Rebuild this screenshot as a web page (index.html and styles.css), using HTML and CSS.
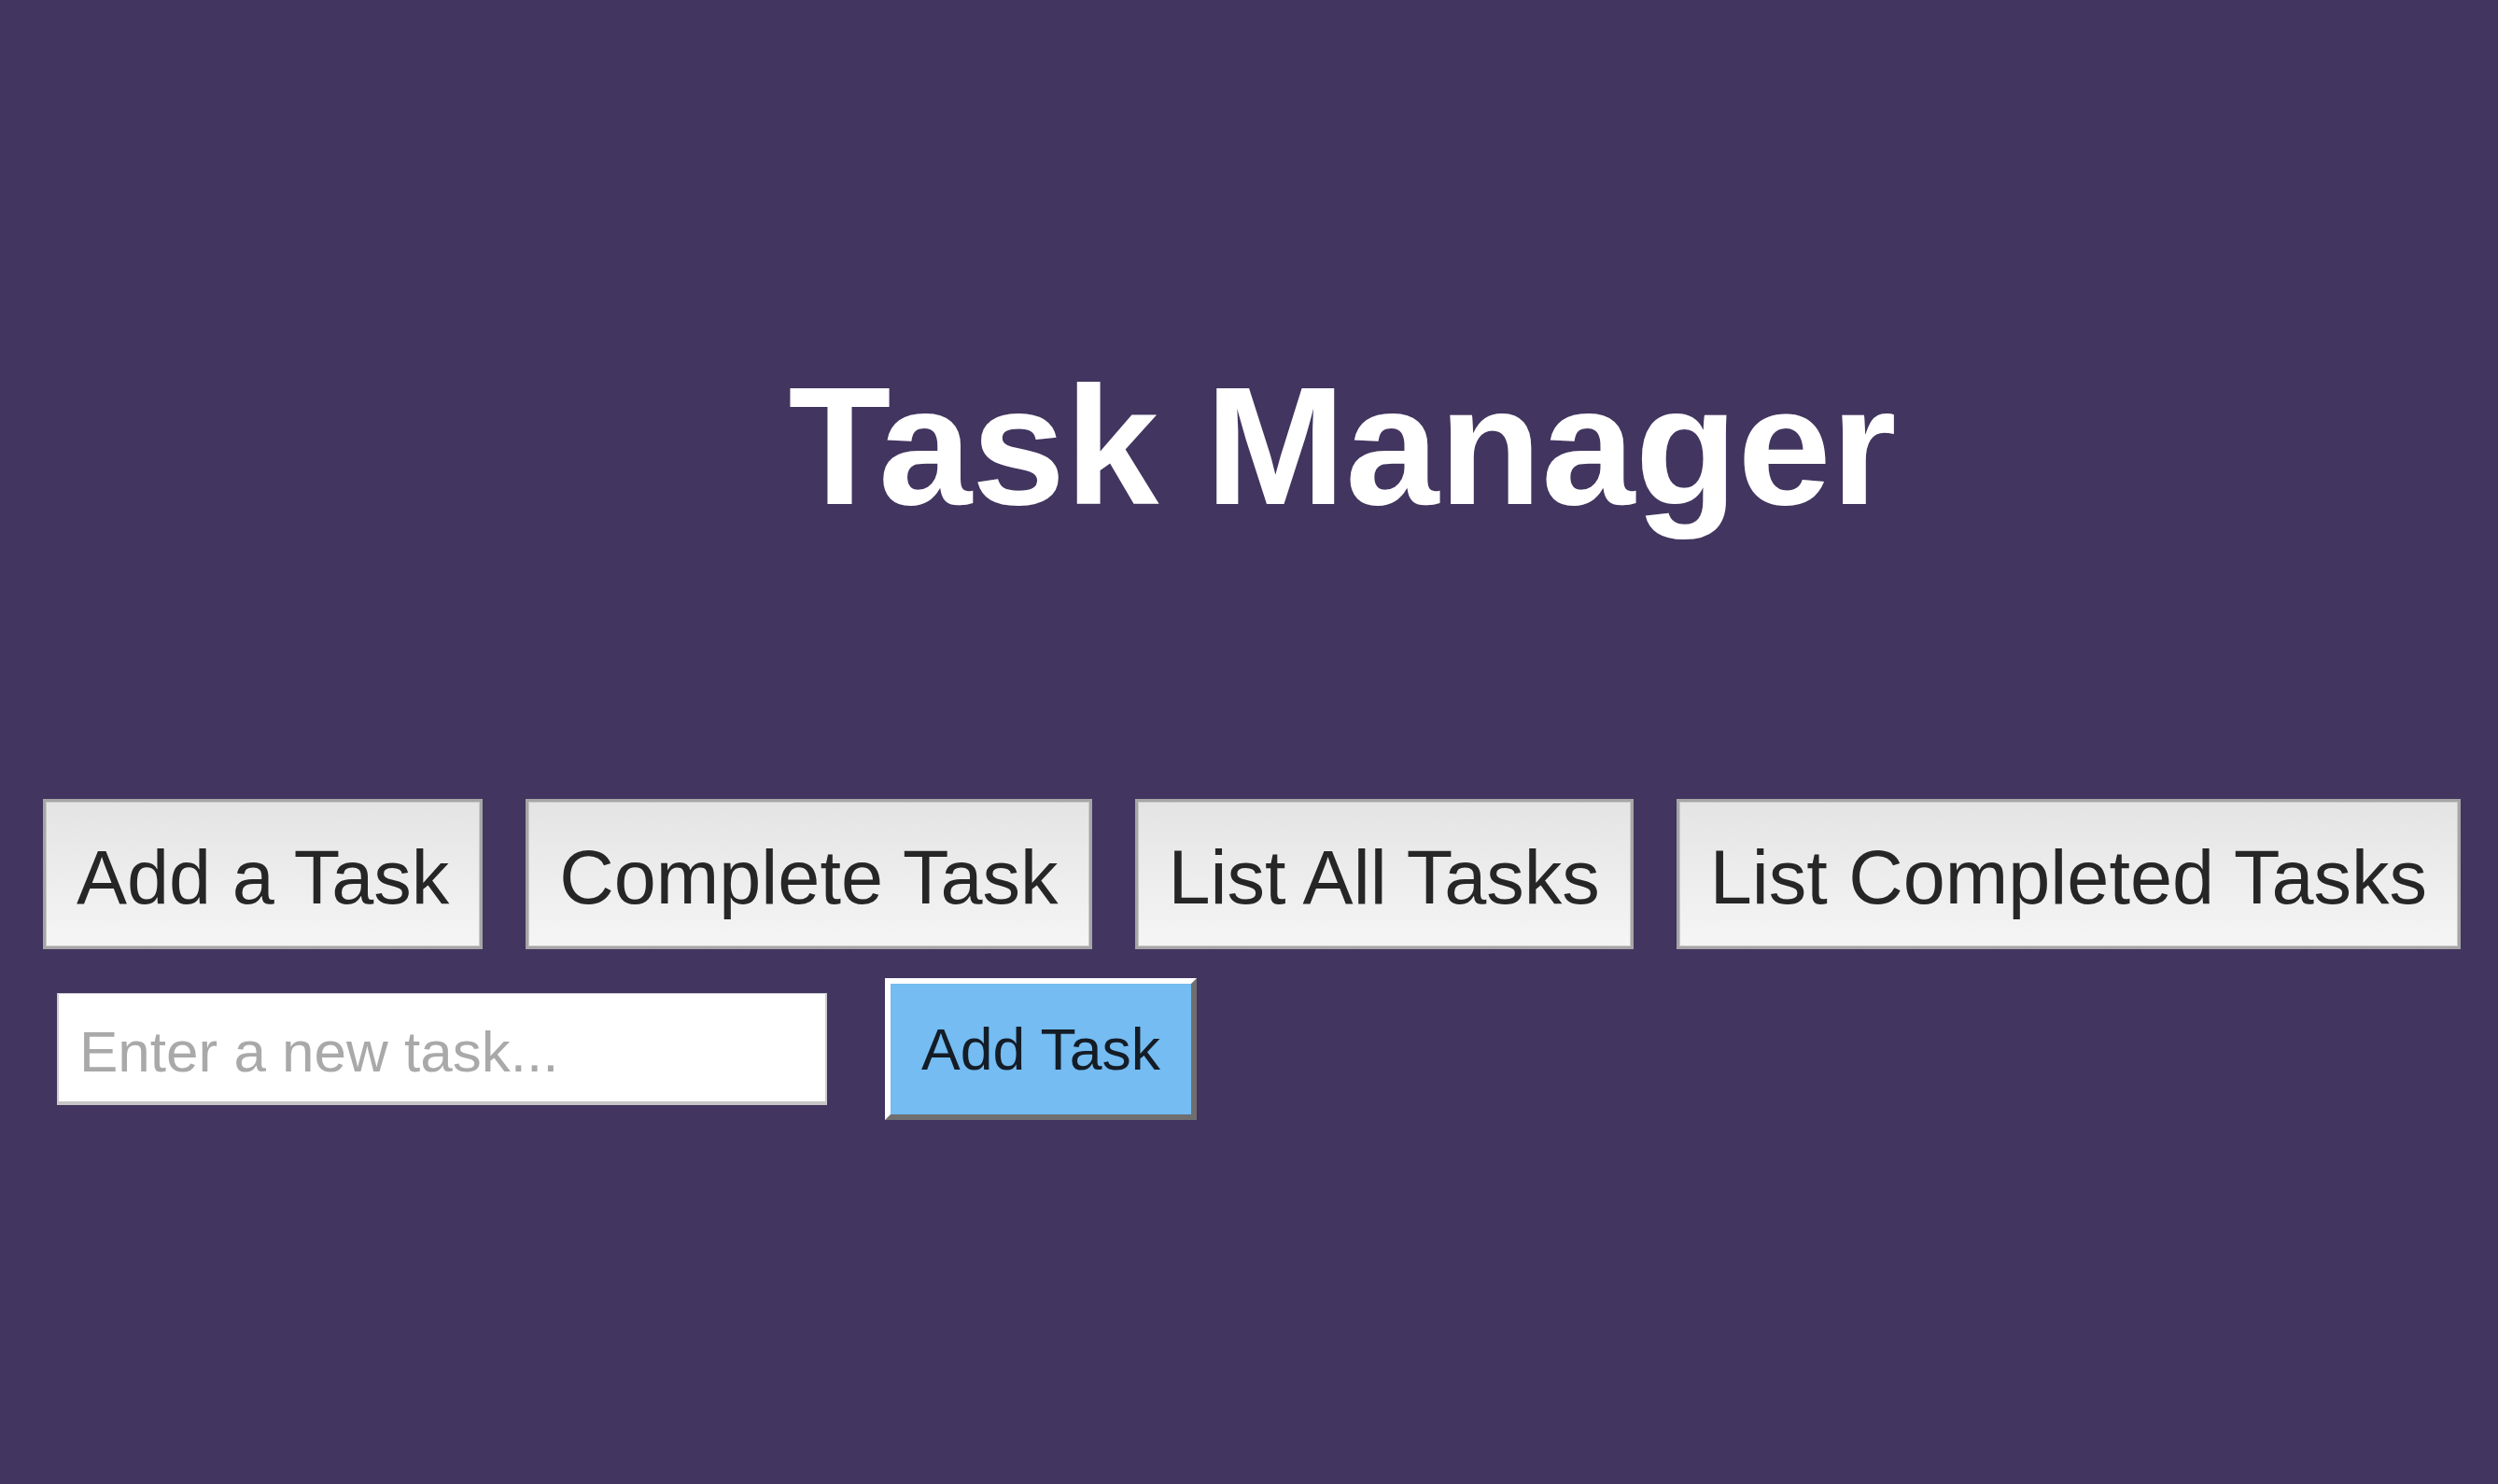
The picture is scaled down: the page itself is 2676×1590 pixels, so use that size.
FILE: index.html
```html
<!DOCTYPE html>
<html lang="en">
<head>
<meta charset="utf-8">
<title>Task Manager</title>
<link rel="stylesheet" href="styles.css">
</head>
<body>
  <main class="app">
    <h1 class="title">Task Manager</h1>
    <div class="actions">
      <button class="action-btn" type="button">Add a Task</button>
      <button class="action-btn" type="button">Complete Task</button>
      <button class="action-btn" type="button">List All Tasks</button>
      <button class="action-btn" type="button">List Completed Tasks</button>
    </div>
    <form class="add-row">
      <input class="task-input" type="text" placeholder="Enter a new task...">
      <button class="add-btn" type="button">Add Task</button>
    </form>
  </main>
</body>
</html>
```
FILE: styles.css
```css
html, body {
  margin: 0;
  padding: 0;
}

body {
  background: #42355f;
  font-family: "Liberation Sans", Arial, Helvetica, sans-serif;
  min-height: 1590px;
}

.app {
  padding-top: 370px;
}

.title {
  margin: 0;
  padding-left: 200px;
  text-align: center;
  color: #ffffff;
  font-size: 180px;
  font-weight: 700;
  line-height: 1.2;
}

.actions {
  display: flex;
  gap: 46px;
  padding: 0 46px;
  margin-top: 270px;
}

.action-btn {
  font-family: inherit;
  font-size: 81px;
  line-height: 1.2;
  color: #262626;
  padding: 33px 33px 25px;
  background: linear-gradient(to bottom, #e4e4e4, #f5f5f5);
  border: 3px solid #a6a6a6;
  box-shadow: inset 0 0 0 1px #c9c9c9;
  border-radius: 0;
  margin: 0;
  cursor: pointer;
  white-space: nowrap;
}

.add-row {
  display: flex;
  align-items: center;
  gap: 62px;
  margin: 31px 0 0;
  padding: 0 46px;
}

.task-input {
  box-sizing: border-box;
  width: 825px;
  height: 120px;
  margin: 0 0 0 15px;
  padding: 8px 22px 0;
  font-family: inherit;
  font-size: 62px;
  line-height: 1.2;
  color: #222;
  background: #ffffff;
  border-style: solid;
  border-width: 1px 2px 4px 2px;
  border-color: #cfcfd6 #cdcdcd #c6c6c6 #cdcdcd;
  border-radius: 0;
  outline: none;
}

.task-input::placeholder {
  color: #a9a9a9;
  opacity: 1;
}

.add-btn {
  font-family: inherit;
  font-size: 62.5px;
  line-height: 1.2;
  color: #141c26;
  background: #74bcf2;
  padding: 33px 33px 32px;
  margin: 0;
  border-style: solid;
  border-width: 6px;
  border-color: #ffffff #6f6f6f #6f6f6f #ffffff;
  border-radius: 0;
  cursor: pointer;
  white-space: nowrap;
}
```
